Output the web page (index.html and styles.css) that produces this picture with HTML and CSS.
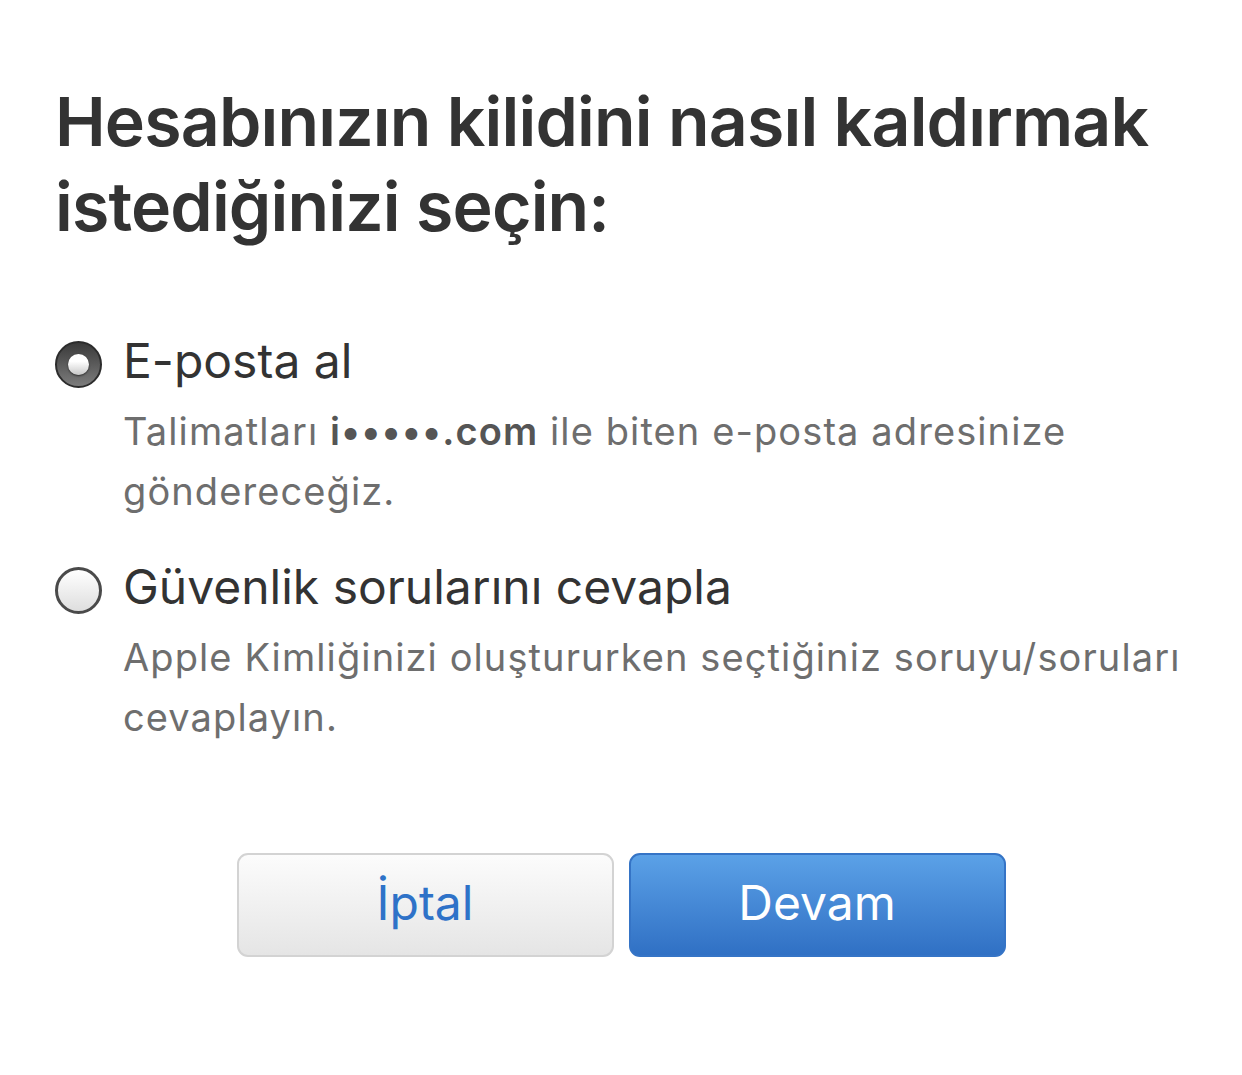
FILE: index.html
```html
<!DOCTYPE html>
<html lang="tr">
<head>
<meta charset="utf-8">
<link rel="stylesheet" href="styles.css">
</head>
<body>
<main class="page">
  <h1 class="title">Hesabınızın kilidini nasıl kaldırmak istediğinizi seçin:</h1>
  <div class="options">
    <div class="option">
      <span class="radio radio-on"><span class="dot"></span></span>
      <div class="label">E-posta al</div>
      <p class="desc">Talimatları <b>i•••••.com</b> ile biten e-posta adresinize göndereceğiz.</p>
    </div>
    <div class="option">
      <span class="radio"></span>
      <div class="label">Güvenlik sorularını cevapla</div>
      <p class="desc">Apple Kimliğinizi oluştururken seçtiğiniz soruyu/soruları cevaplayın.</p>
    </div>
  </div>
  <div class="actions">
    <button class="btn btn-cancel">İptal</button>
    <button class="btn btn-primary">Devam</button>
  </div>
</main>
</body>
</html>
```
FILE: styles.css
```css
html, body {
  margin: 0;
  background: #ffffff;
}
body {
  font-family: Inter, "Noto Sans", "Liberation Sans", sans-serif;
  color: #333333;
}
.page {
  padding: 79px 55px 0 55px;
}
.title {
  margin: 0;
  font-size: 68px;
  line-height: 85px;
  font-weight: 600;
  letter-spacing: -0.85px;
  color: #333333;
}
.options {
  margin-top: 82px;
  display: flex;
  flex-direction: column;
  gap: 36px;
}
.option {
  display: grid;
  grid-template-columns: 48px 1fr;
  column-gap: 20px;
  align-items: center;
}
.label {
  font-size: 48px;
  line-height: 60px;
  color: #333333;
}
.desc {
  grid-column: 2;
  margin: 10px 0 0 0;
  font-size: 38px;
  line-height: 60px;
  letter-spacing: 1.1px;
  color: #6e6e6e;
}
.desc b {
  font-weight: 600;
  color: #555555;
}
.radio {
  width: 47px;
  height: 47px;
  margin-top: 6px;
  box-sizing: border-box;
  border-radius: 50%;
  border: 3px solid #4a4a4a;
  background: linear-gradient(#ffffff, #dedede);
  display: flex;
  align-items: center;
  justify-content: center;
}
.radio-on {
  border: 2px solid #2c2c2c;
  background: linear-gradient(#3a3a3a, #7c7c7c);
}
.dot {
  width: 21px;
  height: 21px;
  border-radius: 50%;
  background: linear-gradient(#ffffff 35%, #c8c8c8);
  box-shadow: 0 1px 2px rgba(0, 0, 0, 0.6);
}
.actions {
  margin-top: 106px;
  display: flex;
  justify-content: center;
  gap: 15px;
}
.btn {
  width: 377px;
  height: 104px;
  box-sizing: border-box;
  border-radius: 11px;
  font-family: inherit;
  font-size: 48px;
  line-height: 1;
  padding: 0 0 4px 0;
  cursor: pointer;
}
.btn-cancel {
  border: 2px solid #d3d3d3;
  background: linear-gradient(#fcfcfc, #e5e5e5);
  color: #2e72c8;
}
.btn-primary {
  border: 2px solid #3574c6;
  background: linear-gradient(#5ba1e7, #3070c4);
  color: #ffffff;
}
```
